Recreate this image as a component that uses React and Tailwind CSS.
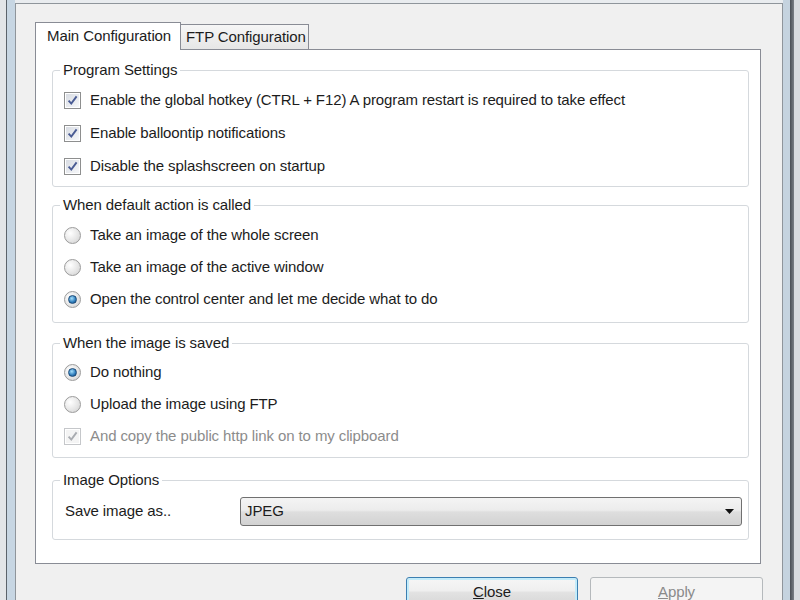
import React from "react";

const CheckMark = ({ disabled }) => (
  <svg width="11" height="11" viewBox="0 0 11 11">
    <path
      d="M1.6 5.6 L4.3 8.6 L9.6 1.4"
      fill="none"
      stroke={disabled ? "#a9acb1" : "#4a5c94"}
      strokeWidth="1.9"
    />
  </svg>
);

const CheckBox = ({ checked, disabled }) => (
  <span
    className={`w-[17px] h-[17px] shrink-0 flex items-center justify-center border shadow-[inset_0_0_0_1px_#ffffff] ${
      disabled
        ? "border-[#c5c7ca] bg-[#f4f4f4]"
        : "border-[#8e8f8f] bg-[linear-gradient(135deg,#d6dae1,#f8f9fb)]"
    }`}
  >
    {checked && <CheckMark disabled={disabled} />}
  </span>
);

const Radio = ({ checked }) => (
  <span className="w-[17px] h-[17px] shrink-0 rounded-full border border-[#9b9b9b] bg-[radial-gradient(circle_at_35%_35%,#ffffff,#e6e6e6_55%,#cdcdcd)] flex items-center justify-center">
    {checked && (
      <span className="w-[9px] h-[9px] rounded-full border border-[#1d4c7a] bg-[radial-gradient(circle_at_40%_35%,#a6e0fc,#2c7bbb_60%,#164877)]" />
    )}
  </span>
);

const Group = ({ title, className, children }) => (
  <fieldset
    className={`border border-[#d5d9dd] rounded-[3px] pl-[11px] pr-[6px] ${className}`}
  >
    <legend className="-ml-[4px] px-[3px] leading-[18px]">{title}</legend>
    {children}
  </fieldset>
);

const Option = ({ control, label, tall, muted }) => (
  <div
    className={`flex items-center gap-[9px] ${tall ? "h-[33px]" : "h-[32px]"} ${
      muted ? "text-[#8c8c8c]" : ""
    }`}
  >
    {control}
    <span className="whitespace-nowrap">{label}</span>
  </div>
);

const App = () => {
  return (
    <div className="w-[800px] h-[600px] overflow-hidden flex bg-[#f0f0f0] text-[#1c1c1c] text-[15px] tracking-[-0.1px] font-['Liberation_Sans',Arial,sans-serif]">
      {/* left window frame */}
      <div className="flex shrink-0">
        <div className="w-[6px] bg-[#e2e5e8]" />
        <div className="w-px bg-[#5b636b]" />
        <div className="w-[8px] bg-[#c7d6e3]" />
      </div>

      <div className="flex-1 flex flex-col min-h-0">
        <div className="h-[3px] shrink-0 bg-[#e9ecef]" />
        <div className="flex-1 border-l border-t border-r border-[#8f959b] bg-[#f0f0f0] flex flex-col">
          {/* tabs */}
          <div className="shrink-0 pt-[18px] pl-[19px] flex items-end">
            <div className="relative z-10 -mb-px h-[28px] w-[146px] whitespace-nowrap bg-white border border-b-0 border-[#898c95] flex items-center pl-[11px]">
              Main Configuration
            </div>
            <div className="-ml-px h-[25px] w-[129px] whitespace-nowrap bg-[linear-gradient(#f6f6f6,#e6e6e6)] border border-b-0 border-[#898c95] flex items-center pl-[5px]">
              FTP Configuration
            </div>
          </div>

          {/* tab panel */}
          <div className="shrink-0 ml-[19px] w-[726px] h-[515px] bg-white border border-[#898c95] pt-[11px] pl-[16px] pr-[11px]">
            <Group title="Program Settings" className="pt-[5px] pb-[3px]">
              <Option
                tall
                control={<CheckBox checked />}
                label="Enable the global hotkey (CTRL + F12) A program restart is required to take effect"
              />
              <Option
                tall
                control={<CheckBox checked />}
                label="Enable balloontip notifications"
              />
              <Option
                tall
                control={<CheckBox checked />}
                label="Disable the splashscreen on startup"
              />
            </Group>

            <Group
              title="When default action is called"
              className="mt-[9px] pt-[5px] pb-[7px]"
            >
              <Option control={<Radio />} label="Take an image of the whole screen" />
              <Option control={<Radio />} label="Take an image of the active window" />
              <Option
                control={<Radio checked />}
                label="Open the control center and let me decide what to do"
              />
            </Group>

            <Group
              title="When the image is saved"
              className="mt-[11px] pt-[4px] pb-[5px]"
            >
              <Option control={<Radio checked />} label="Do nothing" />
              <Option control={<Radio />} label="Upload the image using FTP" />
              <Option
                muted
                control={<CheckBox checked disabled />}
                label="And copy the public http link on to my clipboard"
              />
            </Group>

            <Group title="Image Options" className="mt-[13px] pt-[6px] pb-[12px]">
              <div className="h-[32px] flex items-center">
                <span className="w-[176px] pl-[1px]">Save image as..</span>
                <div className="h-[29px] flex-1 flex items-center justify-between border border-[#707070] rounded-[3px] pl-[4px] pr-[7px] bg-[linear-gradient(#f4f4f4,#ececec_45%,#dedede_52%,#d2d2d2)]">
                  <span>JPEG</span>
                  <svg width="9" height="5" viewBox="0 0 9 5">
                    <path d="M0 0 H9 L4.5 5 Z" fill="#111111" />
                  </svg>
                </div>
              </div>
            </Group>
          </div>

          {/* buttons */}
          <div className="shrink-0 mt-[13px] flex justify-end gap-[12px] pr-[19px]">
            <button className="w-[172px] h-[30px] shrink-0 rounded-[3px] border border-[#3c7fb1] shadow-[inset_0_0_0_2px_#c4ecfa] bg-[linear-gradient(#f6f6f6,#efefef_45%,#e2e2e2_52%,#d6d6d6)] text-[#1c1c1c]">
              <span className="underline">C</span>lose
            </button>
            <button className="w-[173px] h-[30px] shrink-0 rounded-[3px] border border-[#b5b9bc] bg-[#f4f4f4] text-[#8a8a8a]">
              <span className="underline">A</span>pply
            </button>
          </div>
        </div>
      </div>

      {/* right window frame */}
      <div className="flex shrink-0">
        <div className="w-[7px] bg-[#c5d3df]" />
        <div className="w-[4px] bg-[linear-gradient(90deg,#4a4f55,#7b8086)]" />
        <div className="w-[6px] bg-[#d9dcdf]" />
      </div>
    </div>
  );
};

export default App;
